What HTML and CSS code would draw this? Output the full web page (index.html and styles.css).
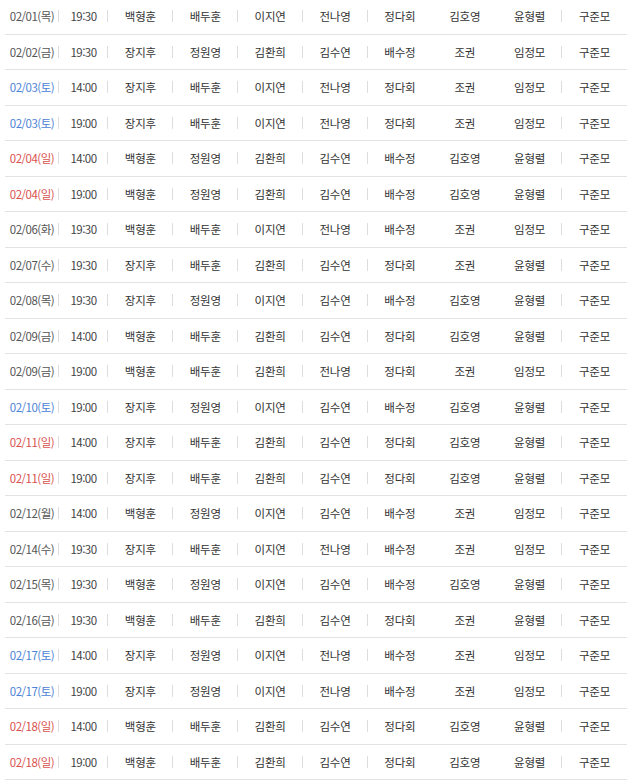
FILE: index.html
```html
<!DOCTYPE html>
<html lang="ko">
<head>
<meta charset="utf-8">
<title>캐스팅 일정</title>
<link rel="stylesheet" href="styles.css">
</head>
<body>
<div class="schedule">
  <div class="row"><div class="c date sep">02/01(목)</div><div class="c time sep">19:30</div><div class="c sep">백형훈</div><div class="c sep">배두훈</div><div class="c sep">이지연</div><div class="c sep">전나영</div><div class="c">정다회</div><div class="c">김호영</div><div class="c sep">윤형렬</div><div class="c">구준모</div></div>
  <div class="row"><div class="c date sep">02/02(금)</div><div class="c time sep">19:30</div><div class="c sep">장지후</div><div class="c sep">정원영</div><div class="c sep">김환희</div><div class="c sep">김수연</div><div class="c">배수정</div><div class="c">조권</div><div class="c sep">임정모</div><div class="c">구준모</div></div>
  <div class="row"><div class="c date sat sep">02/03(토)</div><div class="c time sep">14:00</div><div class="c sep">장지후</div><div class="c sep">배두훈</div><div class="c sep">이지연</div><div class="c sep">전나영</div><div class="c">정다회</div><div class="c">조권</div><div class="c sep">임정모</div><div class="c">구준모</div></div>
  <div class="row"><div class="c date sat sep">02/03(토)</div><div class="c time sep">19:00</div><div class="c sep">장지후</div><div class="c sep">배두훈</div><div class="c sep">이지연</div><div class="c sep">전나영</div><div class="c">정다회</div><div class="c">조권</div><div class="c sep">임정모</div><div class="c">구준모</div></div>
  <div class="row"><div class="c date sun sep">02/04(일)</div><div class="c time sep">14:00</div><div class="c sep">백형훈</div><div class="c sep">정원영</div><div class="c sep">김환희</div><div class="c sep">김수연</div><div class="c">배수정</div><div class="c">김호영</div><div class="c sep">윤형렬</div><div class="c">구준모</div></div>
  <div class="row"><div class="c date sun sep">02/04(일)</div><div class="c time sep">19:00</div><div class="c sep">백형훈</div><div class="c sep">정원영</div><div class="c sep">김환희</div><div class="c sep">김수연</div><div class="c">배수정</div><div class="c">김호영</div><div class="c sep">윤형렬</div><div class="c">구준모</div></div>
  <div class="row"><div class="c date sep">02/06(화)</div><div class="c time sep">19:30</div><div class="c sep">백형훈</div><div class="c sep">배두훈</div><div class="c sep">이지연</div><div class="c sep">전나영</div><div class="c">배수정</div><div class="c">조권</div><div class="c sep">임정모</div><div class="c">구준모</div></div>
  <div class="row"><div class="c date sep">02/07(수)</div><div class="c time sep">19:30</div><div class="c sep">장지후</div><div class="c sep">배두훈</div><div class="c sep">김환희</div><div class="c sep">김수연</div><div class="c">정다회</div><div class="c">조권</div><div class="c sep">윤형렬</div><div class="c">구준모</div></div>
  <div class="row"><div class="c date sep">02/08(목)</div><div class="c time sep">19:30</div><div class="c sep">장지후</div><div class="c sep">정원영</div><div class="c sep">이지연</div><div class="c sep">김수연</div><div class="c">배수정</div><div class="c">김호영</div><div class="c sep">윤형렬</div><div class="c">구준모</div></div>
  <div class="row"><div class="c date sep">02/09(금)</div><div class="c time sep">14:00</div><div class="c sep">백형훈</div><div class="c sep">배두훈</div><div class="c sep">김환희</div><div class="c sep">김수연</div><div class="c">정다회</div><div class="c">김호영</div><div class="c sep">윤형렬</div><div class="c">구준모</div></div>
  <div class="row"><div class="c date sep">02/09(금)</div><div class="c time sep">19:00</div><div class="c sep">백형훈</div><div class="c sep">배두훈</div><div class="c sep">김환희</div><div class="c sep">전나영</div><div class="c">정다회</div><div class="c">조권</div><div class="c sep">임정모</div><div class="c">구준모</div></div>
  <div class="row"><div class="c date sat sep">02/10(토)</div><div class="c time sep">19:00</div><div class="c sep">장지후</div><div class="c sep">정원영</div><div class="c sep">이지연</div><div class="c sep">김수연</div><div class="c">배수정</div><div class="c">김호영</div><div class="c sep">윤형렬</div><div class="c">구준모</div></div>
  <div class="row"><div class="c date sun sep">02/11(일)</div><div class="c time sep">14:00</div><div class="c sep">장지후</div><div class="c sep">배두훈</div><div class="c sep">김환희</div><div class="c sep">김수연</div><div class="c">정다회</div><div class="c">김호영</div><div class="c sep">윤형렬</div><div class="c">구준모</div></div>
  <div class="row"><div class="c date sun sep">02/11(일)</div><div class="c time sep">19:00</div><div class="c sep">장지후</div><div class="c sep">배두훈</div><div class="c sep">김환희</div><div class="c sep">김수연</div><div class="c">정다회</div><div class="c">김호영</div><div class="c sep">윤형렬</div><div class="c">구준모</div></div>
  <div class="row"><div class="c date sep">02/12(월)</div><div class="c time sep">14:00</div><div class="c sep">백형훈</div><div class="c sep">정원영</div><div class="c sep">이지연</div><div class="c sep">김수연</div><div class="c">배수정</div><div class="c">조권</div><div class="c sep">임정모</div><div class="c">구준모</div></div>
  <div class="row"><div class="c date sep">02/14(수)</div><div class="c time sep">19:30</div><div class="c sep">장지후</div><div class="c sep">배두훈</div><div class="c sep">이지연</div><div class="c sep">전나영</div><div class="c">배수정</div><div class="c">조권</div><div class="c sep">임정모</div><div class="c">구준모</div></div>
  <div class="row"><div class="c date sep">02/15(목)</div><div class="c time sep">19:30</div><div class="c sep">백형훈</div><div class="c sep">정원영</div><div class="c sep">이지연</div><div class="c sep">김수연</div><div class="c">배수정</div><div class="c">김호영</div><div class="c sep">윤형렬</div><div class="c">구준모</div></div>
  <div class="row"><div class="c date sep">02/16(금)</div><div class="c time sep">19:30</div><div class="c sep">백형훈</div><div class="c sep">배두훈</div><div class="c sep">김환희</div><div class="c sep">김수연</div><div class="c">정다회</div><div class="c">조권</div><div class="c sep">윤형렬</div><div class="c">구준모</div></div>
  <div class="row"><div class="c date sat sep">02/17(토)</div><div class="c time sep">14:00</div><div class="c sep">장지후</div><div class="c sep">정원영</div><div class="c sep">이지연</div><div class="c sep">전나영</div><div class="c">배수정</div><div class="c">조권</div><div class="c sep">임정모</div><div class="c">구준모</div></div>
  <div class="row"><div class="c date sat sep">02/17(토)</div><div class="c time sep">19:00</div><div class="c sep">장지후</div><div class="c sep">정원영</div><div class="c sep">이지연</div><div class="c sep">전나영</div><div class="c">배수정</div><div class="c">조권</div><div class="c sep">임정모</div><div class="c">구준모</div></div>
  <div class="row"><div class="c date sun sep">02/18(일)</div><div class="c time sep">14:00</div><div class="c sep">백형훈</div><div class="c sep">배두훈</div><div class="c sep">김환희</div><div class="c sep">김수연</div><div class="c">정다회</div><div class="c">김호영</div><div class="c sep">윤형렬</div><div class="c">구준모</div></div>
  <div class="row"><div class="c date sun sep">02/18(일)</div><div class="c time sep">19:00</div><div class="c sep">백형훈</div><div class="c sep">배두훈</div><div class="c sep">김환희</div><div class="c sep">김수연</div><div class="c">정다회</div><div class="c">김호영</div><div class="c sep">윤형렬</div><div class="c">구준모</div></div>
</div>
</body>
</html>
```

FILE: styles.css
```css
html, body {
  margin: 0;
  padding: 0;
  background: #ffffff;
}

body {
  font-family: "Noto Sans CJK KR", "Noto Sans", sans-serif;
  font-size: 11.5px;
  color: #333333;
  overflow: hidden;
}

.schedule {
  width: 622px;
  margin: -1px 0 0 5px;
}

.row {
  display: grid;
  grid-template-columns: 54px 49px repeat(8, 1fr);
  height: 35.5px;
  box-sizing: border-box;
  border-bottom: 1px solid #e3e3e3;
}

.c {
  position: relative;
  display: flex;
  align-items: center;
  justify-content: center;
  white-space: nowrap;
  letter-spacing: -0.2px;
}

.sep::after {
  content: "";
  position: absolute;
  right: 0;
  top: 50%;
  width: 1px;
  height: 12px;
  margin-top: -6px;
  background: #dddddd;
}

.date {
  color: #555555;
  letter-spacing: -0.5px;
}

.date.sat {
  color: #4c83d6;
}

.date.sun {
  color: #d9524e;
}

.time {
  color: #444444;
  letter-spacing: -0.5px;
}
```
